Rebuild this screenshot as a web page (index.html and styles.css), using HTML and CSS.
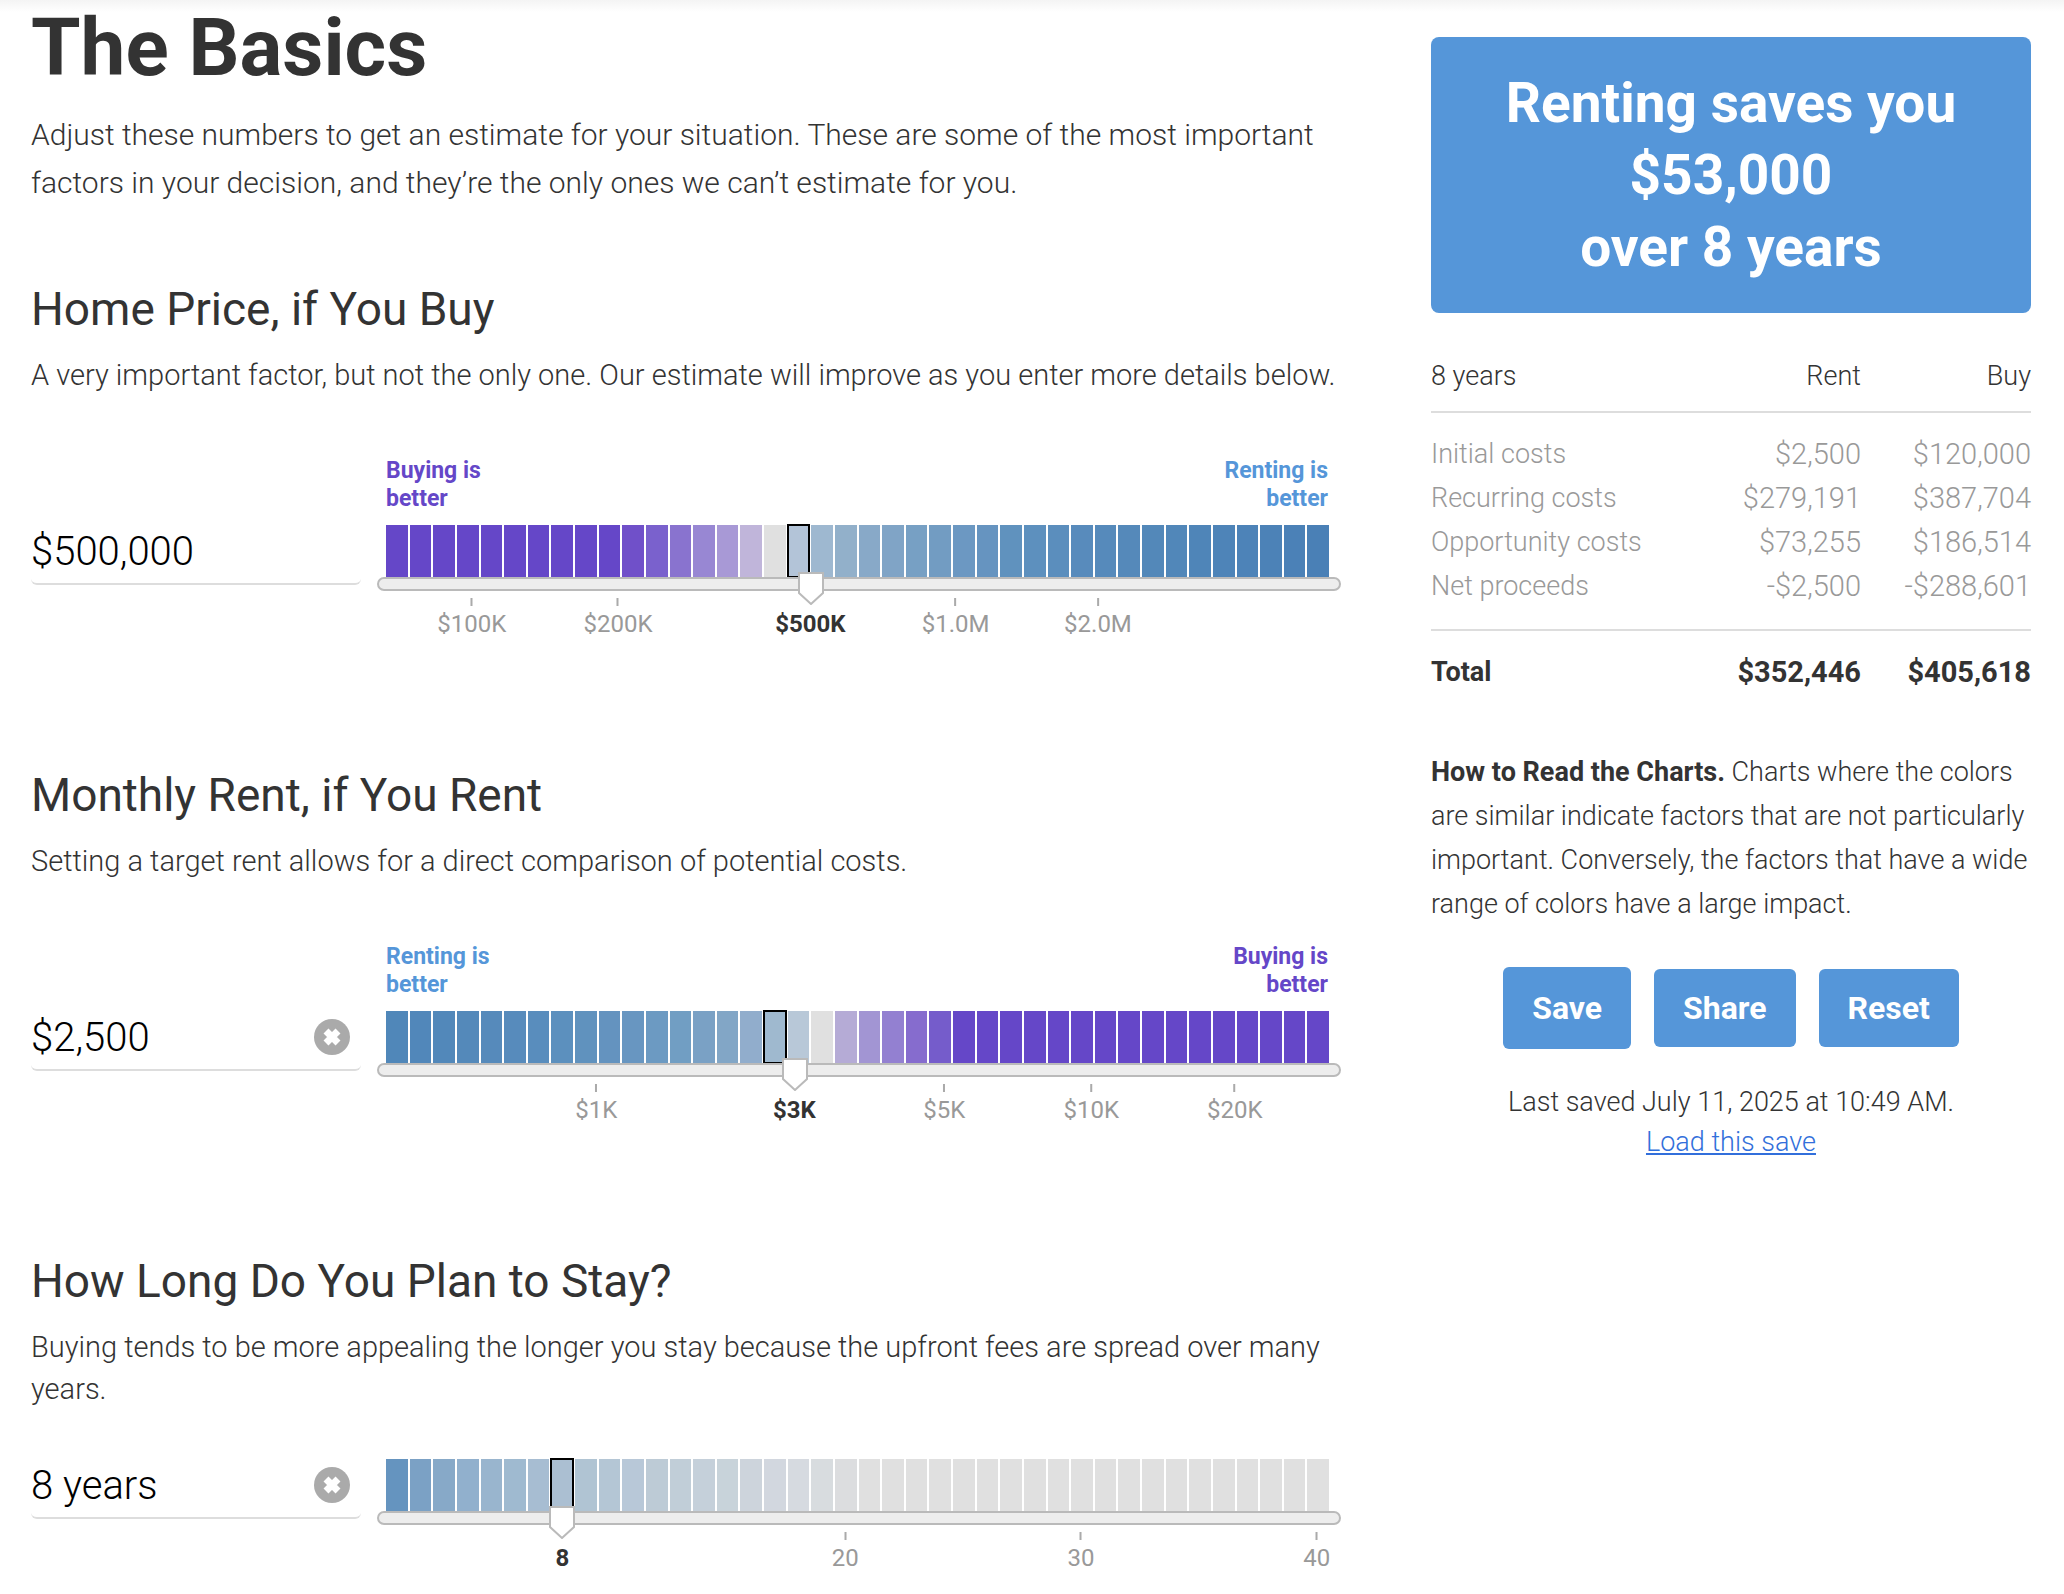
FILE: index.html
```html
<!DOCTYPE html>
<html lang="en">
<head>
    <meta charset="UTF-8">
    <meta name="viewport" content="width=device-width, initial-scale=1.0">
    <link rel="stylesheet" href="styles.css">
    <title>Rent or Buy Calculator</title>
</head>
<body>
    <div class="page">
        <main>
            <h1>The Basics</h1>
            <p class="intro">Adjust these numbers to get an estimate for your situation. These are some of the most important factors in your decision, and they’re the only ones we can’t estimate for you.</p>

            <section class="factor">
                <h2><label for="price">Home Price, if You Buy</label></h2>
                <p class="description">A very important factor, but not the only one. Our estimate will improve as you enter more details below.</p>
                <div class="control">
                    <div class="value">
                        <input type="text" id="price" value="$500,000">
                    </div>
                    <div class="chart">
                        <div class="legend">
                            <span class="buying">Buying is better</span>
                            <span class="renting">Renting is better</span>
                        </div>
                        <div class="bars" id="priceBars"></div>
                        <input type="range" min="0" max="1000" value="449" aria-label="Home price">
                        <div class="axis" id="priceAxis"></div>
                    </div>
                </div>
            </section>

            <section class="factor">
                <h2><label for="rent">Monthly Rent, if You Rent</label></h2>
                <p class="description">Setting a target rent allows for a direct comparison of potential costs.</p>
                <div class="control">
                    <div class="value">
                        <input type="text" id="rent" value="$2,500">
                        <button type="button" class="clear" aria-label="Reset monthly rent">
                            <svg viewBox="0 0 36 36"><circle cx="18" cy="18" r="18"/><path d="M12 12L24 24M24 12L12 24"/></svg>
                        </button>
                    </div>
                    <div class="chart">
                        <div class="legend">
                            <span class="renting">Renting is better</span>
                            <span class="buying">Buying is better</span>
                        </div>
                        <div class="bars" id="rentBars"></div>
                        <input type="range" min="0" max="1000" value="431" aria-label="Monthly rent">
                        <div class="axis" id="rentAxis"></div>
                    </div>
                </div>
            </section>

            <section class="factor">
                <h2><label for="stay">How Long Do You Plan to Stay?</label></h2>
                <p class="description">Buying tends to be more appealing the longer you stay because the upfront fees are spread over many years.</p>
                <div class="control no-legend">
                    <div class="value">
                        <input type="text" id="stay" value="8 years">
                        <button type="button" class="clear" aria-label="Reset length of stay">
                            <svg viewBox="0 0 36 36"><circle cx="18" cy="18" r="18"/><path d="M12 12L24 24M24 12L12 24"/></svg>
                        </button>
                    </div>
                    <div class="chart">
                        <div class="bars" id="stayBars"></div>
                        <input type="range" min="0" max="1000" value="182" aria-label="Years to stay">
                        <div class="axis" id="stayAxis"></div>
                    </div>
                </div>
            </section>
        </main>

        <aside>
            <div class="result">Renting saves you<br>$53,000<br>over 8 years</div>

            <table>
                <thead>
                    <tr><th>8 years</th><th>Rent</th><th>Buy</th></tr>
                </thead>
                <tbody>
                    <tr><td>Initial costs</td><td>$2,500</td><td>$120,000</td></tr>
                    <tr><td>Recurring costs</td><td>$279,191</td><td>$387,704</td></tr>
                    <tr><td>Opportunity costs</td><td>$73,255</td><td>$186,514</td></tr>
                    <tr><td>Net proceeds</td><td>-$2,500</td><td>-$288,601</td></tr>
                </tbody>
                <tfoot>
                    <tr><td>Total</td><td>$352,446</td><td>$405,618</td></tr>
                </tfoot>
            </table>

            <p class="help"><strong>How to Read the Charts.</strong> Charts where the colors are similar indicate factors that are not particularly important. Conversely, the factors that have a wide range of colors have a large impact.</p>

            <div class="buttons">
                <button type="button" class="save">Save</button>
                <button type="button">Share</button>
                <button type="button">Reset</button>
            </div>

            <p class="saved">Last saved July 11, 2025 at 10:49 AM.<br><a href="#">Load this save</a></p>
        </aside>
    </div>

    <script src="script.js"></script>
</body>
</html>
```
FILE: styles.css
```css
* {
    box-sizing: border-box;
}

body {
    margin: 0;
    background: #fff linear-gradient(#f4f4f4, #fff) no-repeat 0 0 / 100% 12px;
    color: #333;
    font-family: Roboto, "Liberation Sans", sans-serif;
    font-weight: 300;
    font-size: 27px;
}

.page {
    display: grid;
    grid-template-columns: minmax(0, 1fr) 600px;
    gap: 90px;
    padding: 0 33px 0 31px;
}

h1, h2, p {
    margin: 0;
}

h1 {
    padding-top: 4px;
    font-size: 80px;
    line-height: 88px;
    font-weight: 700;
}

.intro {
    margin-top: 19px;
    font-size: 30px;
    line-height: 48px;
}

.factor {
    margin-top: 129px;
}

.intro + .factor {
    margin-top: 74px;
}

h2 {
    font-size: 46px;
    line-height: 56px;
    font-weight: 400;
}

.description {
    margin-top: 17px;
    font-size: 29px;
    line-height: 42px;
}

.control {
    display: grid;
    grid-template-columns: 330px minmax(0, 1fr);
    gap: 16px;
    margin-top: 61px;
}

.control.no-legend {
    margin-top: 49px;
}

/* Text boxes */
.value {
    display: flex;
    align-items: center;
    align-self: end;
    height: 66px;
    margin-bottom: 53px;
    padding-right: 11px;
    border-bottom: 2px solid #ddd;
    border-radius: 6px;
}

/* the box is taller than the chart here, let it reach above the bars */
.no-legend .value {
    margin-top: -6px;
}

.value input {
    flex: 1;
    min-width: 0;
    padding: 0;
    border: none;
    background: none;
    color: #000;
    font: inherit;
    font-size: 40px;
}

.clear {
    width: 36px;
    height: 36px;
    padding: 0;
    border: none;
    background: none;
    cursor: pointer;
}

.clear svg {
    display: block;
    fill: #aaa;
    stroke: #fff;
    stroke-width: 7;
}

.clear circle {
    stroke: none;
}

/* Charts */
.legend {
    display: flex;
    justify-content: space-between;
    margin: 0 13px 12px 9px;
    font-size: 23px;
    line-height: 28px;
    font-weight: 700;
}

.legend span {
    width: 120px;
}

.legend span:last-child {
    text-align: right;
}

.buying {
    color: #6547c8;
}

.renting {
    color: #5596d9;
}

.bars {
    display: flex;
    gap: 2px;
    height: 52px;
    margin: 0 12px 0 9px;
}

.bars span {
    flex: 1;
}

.bars .selected {
    box-shadow: inset 0 0 0 1px #000, 0 0 0 1px #000;
}

input[type="range"] {
    appearance: none;
    position: relative;
    display: block;
    width: 100%;
    height: 14px;
    margin: 0;
    background: none;
}

input[type="range"]::-webkit-slider-runnable-track {
    height: 14px;
    border: 2px solid #bababa;
    border-radius: 7px;
    background: #ededed;
}

input[type="range"]::-webkit-slider-thumb {
    appearance: none;
    width: 26px;
    height: 33px;
    margin-top: -7px;
    background: url("data:image/svg+xml,%3Csvg xmlns='http://www.w3.org/2000/svg' width='26' height='33'%3E%3Cpath d='M1 1H25V21L13 32L1 21Z' fill='white' stroke='%23bababa' stroke-width='2'/%3E%3C/svg%3E");
}

.axis {
    position: relative;
    height: 40px;
    margin: 7px 12px 0 9px;
    color: #999;
    font-size: 24px;
    line-height: 28px;
    font-weight: 400;
}

/* each mark is centred on its value along the scale */
.axis span {
    position: absolute;
    display: flex;
    flex-direction: column;
    align-items: center;
    gap: 4px;
    transform: translateX(-50%);
}

.axis span::before {
    content: "";
    width: 2px;
    height: 8px;
    background: #aaa;
}

.axis .current {
    color: #333;
    font-weight: 700;
}

.axis .current::before {
    visibility: hidden;
}

/* Sidebar */
aside {
    padding-top: 37px;
}

.result {
    padding: 30px;
    border-radius: 8px;
    background: #5596d9;
    color: #fff;
    font-size: 55px;
    line-height: 72px;
    font-weight: 700;
    text-align: center;
}

table {
    width: 100%;
    margin-top: 32px;
    border-collapse: collapse;
    line-height: 44px;
}

th, td {
    padding: 0;
    font-weight: 300;
    text-align: right;
}

td {
    font-size: 29px;
}

th:first-child, td:first-child {
    font-size: 27px;
    text-align: left;
}

th:last-child, td:last-child {
    width: 170px;
}

thead th {
    padding: 9px 0 13px;
    border-bottom: 2px solid #ddd;
}

tbody {
    color: #999;
}

tbody tr:first-child td {
    padding-top: 19px;
}

tbody tr:last-child td {
    padding-bottom: 21px;
}

tfoot td {
    padding-top: 19px;
    border-top: 2px solid #ddd;
    font-weight: 700;
}

.help {
    margin-top: 56px;
    line-height: 44px;
}

strong {
    font-weight: 700;
}

.buttons {
    display: flex;
    justify-content: center;
    align-items: center;
    gap: 23px;
    margin-top: 41px;
}

.buttons button {
    height: 78px;
    padding: 0 29px;
    border: none;
    border-radius: 6px;
    background: #5596d9;
    color: #fff;
    font: inherit;
    font-size: 32px;
    font-weight: 700;
    cursor: pointer;
}

.buttons .save {
    height: 82px;
}

.saved {
    margin-top: 33px;
    line-height: 40px;
    text-align: center;
}

a {
    color: #326fdb;
}
```
FILE: script.js
```js
const purple = '#6547c8';
const gray = '#e0e0e0';

const charts = {
    price: {
        colors: [
            ...Array(10).fill(purple),
            '#7050c9', '#7a61cd', '#8973cf', '#9887d3', '#a899d6', '#c0b5da', gray,
            '#b3c4d8', '#9eb8d0', '#92b0ca', '#88a9c8', '#80a4c6', '#77a0c4', '#729cc2',
            '#6c98c2', '#6694c0', '#6092be', '#5d90be', '#5b8ebd', '#588bbc', '#568abb',
            '#5589ba', '#5388b9', '#5187b9', '#4f85b8', '#4e84b8', '#4d83b8', '#4c82b7',
            '#4b81b7', '#4a80b6'
        ],
        selected: 17,
        current: ['$500K', 45],
        ticks: [['$100K', 9.1], ['$200K', 24.6], ['$1.0M', 60.4], ['$2.0M', 75.5]]
    },
    rent: {
        colors: [
            '#5087b9', '#5187ba', '#5288ba', '#5489ba', '#568abb', '#578bbc', '#598dbd',
            '#5c90be', '#6092be', '#6493bf', '#6896c1', '#6c9ac2', '#719ec3', '#7aa1c5',
            '#82a6c6', '#91adcc', '#9fb9cf', '#b8c8d8', gray, '#b5abd6', '#a295d3',
            '#9380d1', '#866cce', '#755ccb', ...Array(16).fill(purple)
        ],
        selected: 16,
        current: ['$3K', 43.3],
        ticks: [['$1K', 22.3], ['$5K', 59.2], ['$10K', 74.8], ['$20K', 90]]
    },
    stay: {
        colors: [
            '#6594bf', '#7ba1c5', '#87a9c8', '#91b0cd', '#99b5ce', '#9fbad0', '#a7bdd2',
            '#abbfd2', '#b0c4d3', '#b4c6d5', '#b8c8d8', '#bdcbd6', '#c1ced8', '#c5d0da',
            '#c8d3da', '#cdd4dc', '#d2d7df', '#d6dae0', '#d8dcdf', '#dcdddf',
            ...Array(20).fill(gray)
        ],
        selected: 7,
        current: ['8', 18.7],
        ticks: [['20', 48.7], ['30', 73.7], ['40', 98.7]]
    }
};

function addMark(axis, mark, className) {
    const span = document.createElement('span');
    span.className = className;
    span.textContent = mark[0];
    span.style.left = mark[1] + '%';
    axis.appendChild(span);
}

for (const name in charts) {
    const chart = charts[name];
    const bars = document.getElementById(name + 'Bars');
    const axis = document.getElementById(name + 'Axis');

    chart.colors.forEach(function(color, index) {
        const bar = document.createElement('span');
        bar.style.backgroundColor = color;
        if (index === chart.selected) {
            bar.className = 'selected';
        }
        bars.appendChild(bar);
    });

    chart.ticks.forEach(function(tick) {
        addMark(axis, tick, 'tick');
    });
    addMark(axis, chart.current, 'current');
}
```
